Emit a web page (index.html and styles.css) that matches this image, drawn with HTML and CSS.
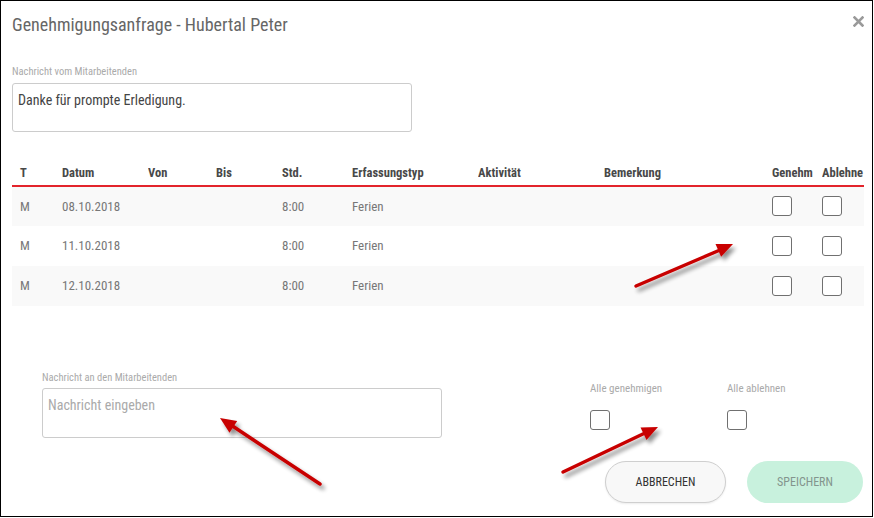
FILE: index.html
```html
<!DOCTYPE html>
<html lang="de">
<head>
<meta charset="utf-8">
<title>Genehmigungsanfrage</title>
<link rel="stylesheet" href="styles.css">
</head>
<body>
<div class="frame">
  <div class="header">
    <h1 class="title">Genehmigungsanfrage - Hubertal Peter</h1>
    <svg class="close" width="11" height="11" viewBox="0 0 11 11" aria-label="Schliessen">
      <path d="M1.5 1.5 L9.5 9.5 M9.5 1.5 L1.5 9.5" stroke="#9a9a9a" stroke-width="2.6" stroke-linecap="square"/>
    </svg>
  </div>

  <div class="label label-top">Nachricht vom Mitarbeitenden</div>
  <div class="textbox">Danke für prompte Erledigung.</div>

  <table class="grid">
    <colgroup>
      <col class="c-t"><col class="c-datum"><col class="c-von"><col class="c-bis"><col class="c-std">
      <col class="c-typ"><col class="c-akt"><col class="c-bem"><col class="c-gen"><col class="c-abl">
    </colgroup>
    <thead>
      <tr>
        <th class="first">T</th><th>Datum</th><th>Von</th><th>Bis</th><th>Std.</th>
        <th>Erfassungstyp</th><th>Aktivität</th><th>Bemerkung</th><th>Genehm</th><th>Ablehne</th>
      </tr>
    </thead>
    <tbody>
      <tr class="odd">
        <td class="first">M</td><td>08.10.2018</td><td></td><td></td><td>8:00</td>
        <td>Ferien</td><td></td><td></td><td><span class="check"></span></td><td><span class="check"></span></td>
      </tr>
      <tr>
        <td class="first">M</td><td>11.10.2018</td><td></td><td></td><td>8:00</td>
        <td>Ferien</td><td></td><td></td><td><span class="check"></span></td><td><span class="check"></span></td>
      </tr>
      <tr class="odd">
        <td class="first">M</td><td>12.10.2018</td><td></td><td></td><td>8:00</td>
        <td>Ferien</td><td></td><td></td><td><span class="check"></span></td><td><span class="check"></span></td>
      </tr>
    </tbody>
  </table>

  <div class="bottom">
    <div class="reply">
      <div class="label">Nachricht an den Mitarbeitenden</div>
      <div class="textbox placeholder">Nachricht eingeben</div>
    </div>
    <div class="all">
      <div class="all-item">
        <div class="label">Alle genehmigen</div>
        <span class="check"></span>
      </div>
      <div class="all-item">
        <div class="label">Alle ablehnen</div>
        <span class="check"></span>
      </div>
    </div>
  </div>

  <div class="actions">
    <button class="btn btn-cancel">ABBRECHEN</button>
    <button class="btn btn-save">SPEICHERN</button>
  </div>

  <svg class="arrows" width="873" height="517" viewBox="0 0 873 517">
    <defs>
      <filter id="sh" x="-20%" y="-20%" width="140%" height="140%">
        <feGaussianBlur in="SourceAlpha" stdDeviation="2"/>
        <feOffset dx="3" dy="4" result="b"/>
        <feComponentTransfer><feFuncA type="linear" slope="0.45"/></feComponentTransfer>
        <feMerge><feMergeNode/><feMergeNode in="SourceGraphic"/></feMerge>
      </filter>
    </defs>
    <g filter="url(#sh)" fill="#c80000" stroke="#c80000" stroke-width="3.5" stroke-linecap="round">
      <line x1="636" y1="286" x2="720" y2="250"/>
      <polygon stroke="none" points="733,244 721.1,256.8 715.5,244"/>
      <line x1="320" y1="484" x2="231" y2="425"/>
      <polygon stroke="none" points="220,418 237.2,421 229.5,432.7"/>
      <line x1="563" y1="472" x2="645" y2="433"/>
      <polygon stroke="none" points="658,427 646.5,440.1 640.5,427.5"/>
    </g>
  </svg>
</div>
</body>
</html>
```

FILE: styles.css
```css
* { box-sizing: border-box; }

html, body {
  margin: 0;
  padding: 0;
  background: #fff;
}

body {
  font-family: "Roboto Condensed", "Liberation Sans Narrow", "DejaVu Sans Condensed", Roboto, sans-serif;
  color: #444;
}

.frame {
  position: relative;
  width: 873px;
  height: 517px;
  border: 1px solid #000;
  padding: 0 8px 0 11px;
  background: #fff;
  overflow: hidden;
}

.header {
  display: flex;
  justify-content: space-between;
  align-items: flex-start;
  padding-top: 14px;
}

.title {
  margin: 0;
  font-size: 18px;
  line-height: 20px;
  font-weight: 400;
  color: #666;
}

.close {
  display: block;
  margin-top: 1px;
  margin-right: 0;
}

.label {
  font-size: 10.5px;
  line-height: 12px;
  color: #aaa;
  margin-bottom: 5px;
}

.label-top {
  margin-top: 31px;
}

.textbox {
  width: 400px;
  height: 49px;
  border: 1px solid #ccc;
  border-radius: 3px;
  padding: 7px 5px;
  font-size: 14px;
  line-height: 18px;
  color: #444;
}

.placeholder {
  color: #aaa;
  height: 50px;
}

.grid {
  width: 852px;
  margin-top: 25px;
  border-collapse: collapse;
  table-layout: fixed;
}

.c-t { width: 50px; }
.c-datum { width: 86px; }
.c-von { width: 68px; }
.c-bis { width: 66px; }
.c-std { width: 70px; }
.c-typ { width: 126px; }
.c-akt { width: 126px; }
.c-bem { width: 168px; }
.c-gen { width: 50px; }
.c-abl { width: 42px; }

.grid th {
  text-align: left;
  font-size: 12.5px;
  line-height: 16px;
  font-weight: 700;
  color: #484848;
  padding: 8px 0 4px 0;
  border-bottom: 2px solid #e3242b;
  white-space: nowrap;
  overflow: hidden;
}

.grid tbody tr {
  height: 40px;
}

.grid td {
  height: 40px;
  padding: 0;
  font-size: 13px;
  line-height: 16px;
  color: #777;
  vertical-align: middle;
  white-space: nowrap;
}

.grid .first {
  padding-left: 8px;
}

.grid tr.odd td {
  background: #f9f9f9;
}

.check {
  display: block;
  width: 20px;
  height: 20px;
  border: 1px solid #707070;
  border-radius: 3px;
  background: #fff;
}

.grid td .check {
  margin-top: -1px;
}

.bottom {
  display: flex;
  margin-top: 66px;
  padding-left: 30px;
}

.reply .label {
  margin-bottom: 4px;
}

.all {
  display: flex;
  margin-left: 148px;
  padding-top: 11px;
}

.all-item {
  width: 137px;
}

.all-item .label {
  font-size: 11px;
  margin-bottom: 15px;
}

.actions {
  display: flex;
  justify-content: flex-end;
  gap: 21px;
  margin-top: 23px;
  padding-right: 1px;
}

.btn {
  height: 42px;
  border-radius: 21px;
  font-family: inherit;
  font-size: 12px;
  cursor: pointer;
}

.btn-cancel {
  width: 121px;
  border: 1px solid #cfcfcf;
  background: #f8f8f8;
  color: #333;
  box-shadow: 0 1px 2px rgba(0,0,0,0.08);
}

.btn-save {
  width: 116px;
  border: none;
  background: #c8f1dd;
  color: #84958d;
}

.arrows {
  position: absolute;
  left: -1px;
  top: -1px;
  pointer-events: none;
}
```
